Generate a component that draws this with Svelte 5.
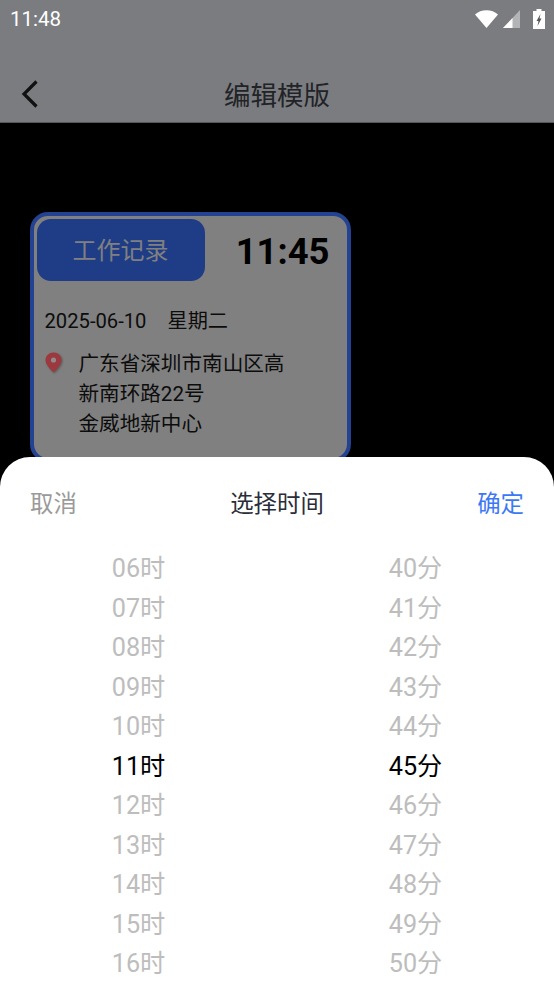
<script>
  const hours = ['06', '07', '08', '09', '10', '11', '12', '13', '14', '15', '16'];
  const minutes = ['40', '41', '42', '43', '44', '45', '46', '47', '48', '49', '50'];
  const selectedHour = '11';
  const selectedMinute = '45';
</script>

<div class="page">
  <header class="top">
    <div class="status">
      <span class="clock">11:48</span>
      <div class="status-icons">
        <svg class="wifi" width="23" height="18" viewBox="0 0 23 18"><path d="M0 4.500C3 1.800 7 0.300 11.500 0.300S20 1.800 23 4.500L11.500 18Z" fill="#fff" /></svg>
        <svg class="signal" width="17" height="18" viewBox="0 0 17 18">
          <path d="M17 0V18H0Z" fill="#b2b4b6" />
          <path d="M9.500 8V18H0Z" fill="#fff" />
        </svg>
        <svg class="battery" width="12" height="20" viewBox="0 0 12 20">
          <path d="M3.500 0H8.500V2H12V20H0V2H3.500Z" fill="#fff" />
          <path d="M7.500 5L3.500 12H5.500L4.500 17L8.500 9.500H6.500Z" fill="#55575a" />
        </svg>
      </div>
    </div>
    <div class="nav">
      <svg class="back" width="18" height="30" viewBox="0 0 18 30"><path d="M15.500 2.500L3 15L15.500 27.500" fill="none" stroke="#111" stroke-width="3.200" /></svg>
      <h1>编辑模版</h1>
    </div>
  </header>

  <main class="stage">
    <section class="card">
      <div class="card-top">
        <div class="tab">工作记录</div>
        <div class="time">11:45</div>
      </div>
      <div class="date"><span>2025-06-10</span><span>星期二</span></div>
      <div class="place">
        <svg class="pin" width="17" height="21" viewBox="0 0 17 21">
          <path d="M8.500 0.500C4 0.500 0.500 3.800 0.500 8C0.500 12.500 5.500 17.500 8.500 20.500C11.500 17.500 16.500 12.500 16.500 8C16.500 3.800 13 0.500 8.500 0.500Z" fill="#9c383e" />
          <circle cx="8.500" cy="8" r="2.600" fill="#8c8c8c" />
        </svg>
        <p>广东省深圳市南山区高<br />新南环路22号<br />金威地新中心</p>
      </div>
    </section>
  </main>

  <div class="sheet">
    <div class="sheet-head">
      <span class="cancel">取消</span>
      <span class="title">选择时间</span>
      <span class="ok">确定</span>
    </div>
    <div class="picker">
      <div class="col">
        {#each hours as h}
          <div class="item" class:on={h === selectedHour}>{h}时</div>
        {/each}
      </div>
      <div class="col">
        {#each minutes as m}
          <div class="item" class:on={m === selectedMinute}>{m}分</div>
        {/each}
      </div>
    </div>
  </div>
</div>

<style>
  :global(body) {
    margin: 0;
    background: #000;
  }

  .page {
    position: relative;
    width: 554px;
    height: 984px;
    overflow: hidden;
    background: #000;
    font-family: Roboto, "Noto Sans CJK SC", sans-serif;
  }

  .top {
    height: 122px;
    background: #7a7c80;
    border-bottom: 1px solid #55565a;
  }

  .status {
    height: 38px;
    padding: 0 9px 0 10px;
    display: flex;
    align-items: center;
    justify-content: space-between;
  }

  .clock {
    color: #fff;
    font-size: 20.5px;
  }

  .status-icons {
    display: flex;
    align-items: center;
    gap: 5px;
  }

  .battery {
    margin-left: 8px;
  }

  .nav {
    position: relative;
    height: 84px;
    display: flex;
    align-items: center;
    justify-content: center;
  }

  .nav h1 {
    margin: 27px 0 0;
    font-size: 26.5px;
    font-weight: 400;
    color: #222326;
  }

  .back {
    position: absolute;
    left: 21px;
    top: 41px;
  }

  .stage {
    padding: 89px 0 0 30px;
  }

  .card {
    width: 321px;
    height: 250px;
    box-sizing: border-box;
    border: 4.5px solid #234292;
    border-radius: 18px;
    background: #808080;
    padding: 2.5px;
  }

  .card-top {
    display: flex;
    align-items: center;
    justify-content: space-between;
    padding-right: 15px;
  }

  .tab {
    width: 168px;
    height: 62px;
    padding-bottom: 2px;
    box-sizing: border-box;
    border-radius: 14px;
    background: #1f3d87;
    color: #808080;
    font-size: 24px;
    display: flex;
    align-items: center;
    justify-content: center;
  }

  .time {
    margin-top: 4px;
    font-size: 36.4px;
    font-weight: 700;
    color: #000;
  }

  .date {
    margin: 26px 0 0 8px;
    display: flex;
    gap: 21px;
    font-size: 20.2px;
    line-height: 28px;
    color: #0c0c0c;
  }

  .place {
    margin: 14px 0 0 8px;
    display: flex;
    gap: 17px;
  }

  .pin {
    flex: none;
    margin-top: 3px;
    filter: drop-shadow(1px 1px 1px rgba(0, 0, 0, 0.3));
  }

  .place p {
    margin: 0;
    font-size: 20.6px;
    line-height: 30px;
    color: #0c0c0c;
  }

  .sheet {
    position: absolute;
    left: 0;
    right: 0;
    bottom: 0;
    height: 527px;
    background: #fff;
    border-radius: 30px 30px 0 0;
  }

  .sheet-head {
    height: 90px;
    padding: 0 30px 0 30px;
    display: flex;
    align-items: center;
    justify-content: space-between;
    font-size: 23.4px;
  }

  .cancel {
    color: #9a9a9a;
  }

  .title {
    color: #2a2d38;
  }

  .ok {
    color: #3c78f5;
  }

  .picker {
    margin-top: 2px;
    display: grid;
    grid-template-columns: 277px 277px;
  }

  .item {
    height: 39.5px;
    line-height: 39.5px;
    text-align: center;
    font-size: 25.2px;
    color: #bdbdbd;
  }

  .item.on {
    color: #000;
  }
</style>
